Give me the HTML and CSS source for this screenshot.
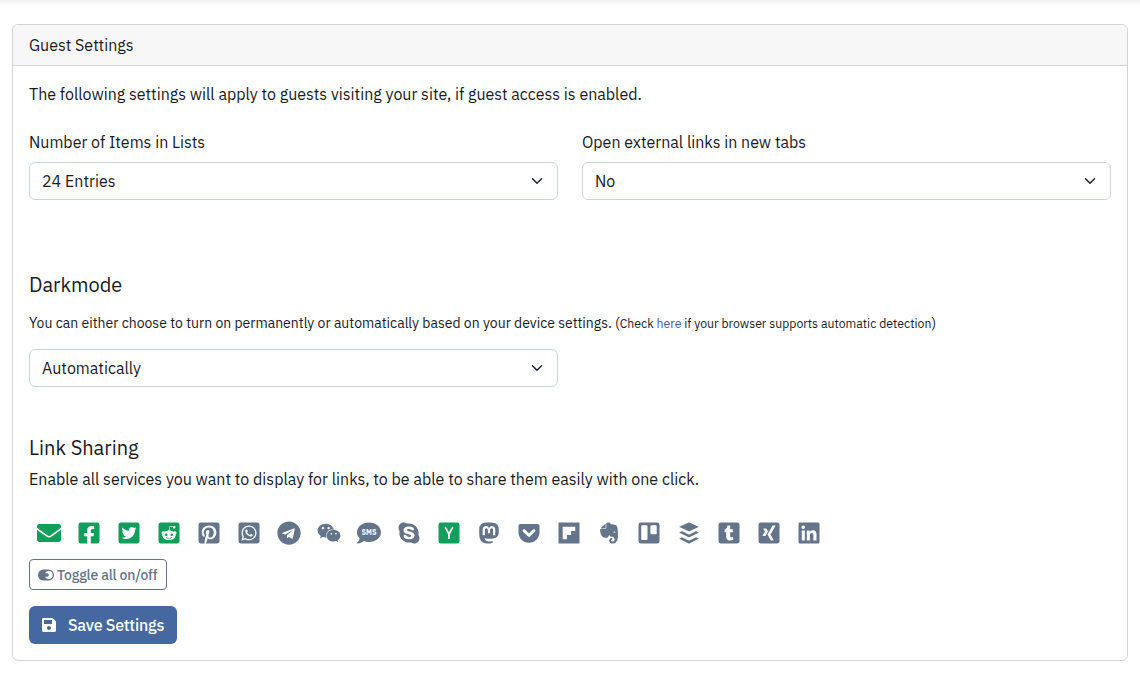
FILE: index.html
```html
<!DOCTYPE html>
<html lang="en">
<head>
<meta charset="utf-8">
<title>Guest Settings</title>
<link rel="stylesheet" href="styles.css">
</head>
<body>
<div class="topbar-shadow"></div>
<main class="card">
  <header class="card-header">Guest Settings</header>
  <div class="card-body">
    <p class="intro">The following settings will apply to guests visiting your site, if guest access is enabled.</p>
    <div class="row">
      <div class="field">
        <label class="label">Number of Items in Lists</label>
        <div class="select"><span>24 Entries</span><svg class="chevron" viewBox="0 0 16 16"><path d="m2 5 6 6 6-6"/></svg></div>
      </div>
      <div class="field">
        <label class="label">Open external links in new tabs</label>
        <div class="select"><span>No</span><svg class="chevron" viewBox="0 0 16 16"><path d="m2 5 6 6 6-6"/></svg></div>
      </div>
    </div>
    <section class="darkmode">
      <h5 class="title">Darkmode</h5>
      <p class="hint">You can either choose to turn on permanently or automatically based on your device settings. (<small>Check <a class="link">here</a> if your browser supports automatic detection</small>)</p>
      <div class="row"><div class="field">
        <div class="select"><span>Automatically</span><svg class="chevron" viewBox="0 0 16 16"><path d="m2 5 6 6 6-6"/></svg></div>
      </div><div class="field"></div></div>
    </section>
    <section class="sharing">
      <h5 class="title">Link Sharing</h5>
      <p class="share-text">Enable all services you want to display for links, to be able to share them easily with one click.</p>
      <div class="services">
        <svg class="icon on" viewBox="0 0 512 512"><path d="M502.3 190.8c3.9-3.1 9.7-.2 9.7 4.7V400c0 26.500-21.500 48-48 48H48c-26.500 0-48-21.500-48-48V195.600c0-5 5.700-7.800 9.700-4.700 22.400 17.400 52.100 39.500 154.100 113.600 21.100 15.400 56.700 47.800 92.200 47.600 35.700.3 72-32.800 92.300-47.600 102-74.100 131.600-96.300 154-113.700zM256 320c23.200.4 56.600-29.200 73.400-41.400 132.700-96.300 142.800-104.700 173.400-128.700 5.800-4.500 9.200-11.500 9.200-18.900v-19c0-26.500-21.500-48-48-48H48c-26.500 0-48 21.500-48 48v19c0 7.400 3.400 14.300 9.200 18.900 30.600 23.900 40.700 32.400 173.400 128.700 16.800 12.200 50.200 41.800 73.400 41.400z"/></svg>
        <svg class="icon on" viewBox="0 0 448 512"><path d="M400 32H48A48 48 0 0 0 0 80v352a48 48 0 0 0 48 48h137.250V327.690h-63V256h63v-54.640c0-62.150 37-96.480 93.670-96.480 27.140 0 55.520 4.840 55.520 4.840v61h-31.270c-30.810 0-40.420 19.120-40.420 38.730V256h68.780l-11 71.690h-57.780V480H400a48 48 0 0 0 48-48V80a48 48 0 0 0-48-48z"/></svg>
        <svg class="icon on" viewBox="0 0 448 512"><path d="M400 32H48C21.500 32 0 53.500 0 80v352c0 26.500 21.500 48 48 48h352c26.500 0 48-21.500 48-48V80c0-26.500-21.500-48-48-48zm-48.900 158.800c.2 2.800.2 5.700.2 8.500 0 86.700-66 186.600-186.600 186.600-37.200 0-71.700-10.800-100.700-29.400 5.300.6 10.400.8 15.800.8 30.700 0 58.900-10.400 81.400-28-28.800-.6-53-19.500-61.300-45.500 10.100 1.500 19.200 1.500 29.600-1.200-30-6.100-52.500-32.500-52.500-64.400v-.8c8.700 4.900 18.900 7.900 29.600 8.300a65.447 65.447 0 0 1-29.200-54.600c0-12.200 3.200-23.400 8.900-33.100 32.300 39.800 80.800 65.800 135.200 68.600-9.300-44.500 24-80.600 64-80.600 18.900 0 35.900 7.900 47.900 20.700 14.800-2.800 29-8.300 41.600-15.800-4.900 15.200-15.200 28-28.800 36.100 13.200-1.400 26-5.100 37.800-10.200-8.900 13.100-20.100 24.700-32.900 34z"/></svg>
        <svg class="icon on" viewBox="0 0 448 512"><path d="M283.2 345.5c2.7 2.7 2.7 6.8 0 9.2-24.5 24.5-93.8 24.6-118.4 0-2.7-2.4-2.7-6.5 0-9.2 2.4-2.4 6.5-2.4 8.9 0 18.7 19.2 81 19.6 100.5 0 2.4-2.3 6.600-2.300 9 0zm-91.300-53.800c0-14.900-11.900-26.800-26.500-26.800-14.900 0-26.800 11.900-26.800 26.800 0 14.600 11.900 26.500 26.800 26.500 14.600 0 26.500-11.900 26.500-26.500zm90.700-26.800c-14.600 0-26.500 11.900-26.500 26.800 0 14.600 11.900 26.500 26.500 26.500 14.900 0 26.800-11.900 26.800-26.500 0-14.900-11.900-26.800-26.800-26.800zM448 80v352c0 26.500-21.500 48-48 48H48c-26.500 0-48-21.500-48-48V80c0-26.500 21.500-48 48-48h352c26.500 0 48 21.500 48 48zm-99.700 140.600c-10.100 0-19 4.200-25.600 10.700-24.100-16.700-56.500-27.400-92.500-28.600l18.700-84.200 59.500 13.400c0 14.600 11.900 26.500 26.500 26.500 14.900 0 26.800-12.200 26.800-26.800 0-14.600-11.900-26.800-26.800-26.800-10.400 0-19.300 6.200-23.800 14.900l-65.700-14.600c-3.300-.9-6.500 1.500-7.400 4.800l-20.500 92.800c-35.700 1.500-67.800 12.200-91.900 28.900-6.500-6.800-15.800-11-25.900-11-37.500 0-49.800 50.400-15.500 67.500-1.200 5.400-1.800 11-1.800 16.700 0 56.500 63.700 102.300 141.900 102.300 78.500 0 142.200-45.800 142.200-102.300 0-5.700-.6-11.600-2.100-17 33.600-17.200 21.200-67.200-16.100-67.200z"/></svg>
        <svg class="icon" viewBox="0 0 448 512"><path d="M448 80v352c0 26.500-21.500 48-48 48H154.400c9.800-16.400 22.400-40 27.400-59.300 3-11.500 15.300-58.400 15.300-58.400 8 15.300 31.400 28.200 56.300 28.200 74.100 0 127.400-68.100 127.400-152.700 0-81.100-66.200-141.800-151.400-141.800-106 0-162.200 71.100-162.200 148.600 0 36 19.200 80.800 49.800 95.100 4.700 2.200 7.100 1.200 8.200-3.300.8-3.400 5-20.100 6.800-27.800.6-2.500.3-4.600-1.700-7-10.100-12.300-18.300-34.900-18.300-56 0-54.200 41-106.600 110.900-106.600 60.300 0 102.600 41.100 102.600 99.900 0 66.400-33.500 112.400-77.200 112.400-24.100 0-42.100-19.900-36.400-44.400 6.900-29.200 20.300-60.700 20.300-81.800 0-53-75.500-45.700-75.500 25 0 21.700 7.300 36.500 7.300 36.500-31.400 132.800-36.100 134.500-29.600 192.600l2.200.8H48c-26.500 0-48-21.500-48-48V80c0-26.500 21.500-48 48-48h352c26.500 0 48 21.500 48 48z"/></svg>
        <svg class="icon" viewBox="0 0 448 512"><path d="M224 122.8c-72.7 0-131.8 59.1-131.9 131.8 0 24.9 7 49.2 20.2 70.1l3.1 5-13.3 48.6 49.9-13.1 4.8 2.9c20.2 12 43.4 18.4 67.1 18.4h.1c72.6 0 133.3-59.1 133.3-131.8 0-35.2-15.2-68.3-40.1-93.2-25-25-58-38.7-93.2-38.7zm77.5 188.4c-3.3 9.3-19.1 17.7-26.7 18.8-12.6 1.900-22.400.9-47.500-9.900-39.700-17.200-65.700-57.200-67.700-59.800-2-2.600-16.200-21.500-16.200-41s10.200-29.100 13.900-33.100c3.600-4 7.900-5 10.600-5 2.600 0 5.300 0 7.600.1 2.400.1 5.700-.9 8.900 6.800 3.300 7.900 11.200 27.400 12.200 29.400s1.700 4.300.3 6.900c-7.600 15.200-15.700 14.600-11.600 21.600 15.300 26.300 30.600 35.400 53.900 47.100 4 2 6.300 1.700 8.600-1 2.300-2.600 9.900-11.600 12.500-15.500 2.600-4 5.300-3.300 8.900-2 3.600 1.300 23.100 10.900 27.100 12.900s6.600 3 7.600 4.600c.9 1.900.9 9.900-2.400 19.100zM400 32H48C21.500 32 0 53.500 0 80v352c0 26.500 21.500 48 48 48h352c26.500 0 48-21.500 48-48V80c0-26.500-21.500-48-48-48zM223.900 413.200c-26.600 0-52.700-6.700-75.800-19.300L64 416l22.500-82.200c-13.900-24-21.200-51.300-21.200-79.300C65.400 167.100 136.500 96 223.900 96c42.400 0 82.200 16.500 112.200 46.500 29.900 30 47.900 69.800 47.900 112.200 0 87.400-72.700 158.500-160.100 158.500z"/></svg>
        <svg class="icon" viewBox="0 0 496 512"><path d="M248 8C111 8 0 119 0 256s111 248 248 248 248-111 248-248S385 8 248 8zm121.800 169.900l-40.700 191.800c-3 13.600-11.100 16.900-22.400 10.500l-62-45.700-29.900 28.800c-3.300 3.300-6.100 6.100-12.500 6.100l4.400-63.100 114.900-103.800c5-4.400-1.100-6.900-7.700-2.500l-142 89.400-61.200-19.100c-13.300-4.200-13.600-13.300 2.800-19.700l239.100-92.200c11.100-4 20.800 2.700 17.200 19.500z"/></svg>
        <svg class="icon" viewBox="0 0 576 512"><path d="M385.2 167.6c6.4 0 12.6.3 18.800 1.100C387.400 90.300 303.300 32 207.700 32 100.500 32 13 104.800 13 197.400c0 53.400 29.300 97.500 77.900 131.600l-19.300 58.600 68-34.100c24.400 4.800 43.800 9.700 68.200 9.700 6.200 0 12.100-.3 18.300-.8-4-12.900-6.200-26.600-6.200-40.800-.1-84.900 72.900-154 165.300-154zm-104.500-52.900c14.500 0 24.200 9.700 24.200 24.400 0 14.500-9.700 24.200-24.200 24.200-14.800 0-29.300-9.700-29.300-24.200.1-14.700 14.600-24.400 29.300-24.400zm-136.400 48.600c-14.500 0-29.300-9.700-29.300-24.200 0-14.800 14.800-24.400 29.300-24.400 14.800 0 24.400 9.700 24.400 24.400 0 14.600-9.600 24.200-24.400 24.200zM563 319.400c0-77.900-77.900-141.300-165.400-141.300-92.700 0-165.400 63.400-165.400 141.300S305 460.700 397.600 460.700c19.300 0 38.900-5.100 58.600-9.900l53.400 29.300-14.800-48.600C534 402.100 563 363.200 563 319.400zm-219.100-24.500c-9.700 0-19.300-9.700-19.300-19.600 0-9.700 9.700-19.300 19.300-19.300 14.800 0 24.400 9.700 24.400 19.300 0 10-9.700 19.600-24.400 19.600zm107.100 0c-9.700 0-19.300-9.700-19.300-19.600 0-9.700 9.700-19.300 19.300-19.300 14.500 0 24.400 9.700 24.400 19.300.1 10-9.900 19.600-24.400 19.600z"/></svg>
        <svg class="icon" viewBox="0 0 512 512"><path d="M256 32C114.600 32 0 125.100 0 240c0 49.600 21.400 95 57 130.700C44.500 421.100 2.700 466 2.200 466.500c-2.200 2.300-2.800 5.700-1.500 8.700 1.300 3 4.100 4.800 7.300 4.800 66.300 0 116-31.800 140.600-51.400 32.700 12.300 69 19.400 107.400 19.400 141.400 0 256-93.100 256-208S397.400 32 256 32z"/><text class="sms" x="256" y="304" text-anchor="middle" textLength="316" lengthAdjust="spacingAndGlyphs">SMS</text></svg>
        <svg class="icon" viewBox="0 0 448 512"><path d="M424.700 299.800c2.900-14 4.700-28.900 4.700-43.800 0-113.500-91.900-205.300-205.300-205.300-14.900 0-29.700 1.700-43.800 4.700C161.300 40.700 137.700 32 112 32 50.200 32 0 82.200 0 144c0 25.700 8.700 49.300 23.300 68.200-2.900 14-4.700 28.900-4.700 43.800 0 113.500 91.900 205.300 205.300 205.300 14.900 0 29.700-1.700 43.800-4.700 19 14.600 42.600 23.300 68.200 23.300 61.800 0 112-50.200 112-112 .1-25.600-8.600-49.200-23.200-68.100zm-194.600 91.500c-65.600 0-120.500-29.200-120.500-65 0-16 9-30.600 29.500-30.600 31.200 0 34.100 44.900 88.100 44.900 25.700 0 42.300-11.400 42.300-26.300 0-18.700-16-21.600-42-28-62.500-15.400-117.800-22-117.800-87.200 0-59.200 58.600-81.100 109.100-81.100 55.100 0 110.800 21.900 110.800 55.400 0 16.900-11.400 31.800-30.300 31.800-28.300 0-29.200-33.500-75-33.500-25.700 0-42 7-42 22.500 0 19.800 20.800 21.800 69.100 33 41.400 9.300 90.700 26.800 90.700 77.600 0 59.100-57.100 86.500-112 86.500z"/></svg>
        <svg class="icon on" viewBox="0 0 448 512"><rect y="32" width="448" height="448" rx="48"/><path class="cut" d="M141 128l83 155 83-155M224 270v114"/></svg>
        <svg class="icon" viewBox="0 0 448 512"><path d="M433 179.110c0-97.200-63.710-125.700-63.710-125.700-62.520-28.700-228.560-28.400-290.480 0 0 0-63.720 28.500-63.720 125.700 0 115.700-6.600 259.400 105.630 289.100 40.510 10.700 75.320 13 103.330 11.400 50.810-2.800 79.320-18.100 79.320-18.100l-1.700-36.900s-36.310 11.400-77.120 10.100c-40.410-1.400-83-4.400-89.630-54a102.540 102.540 0 0 1-.9-13.900c85.630 20.900 158.650 9.100 178.750 6.700 56.120-6.700 105-41.300 111.230-72.900 9.800-49.800 9-121.500 9-121.500zm-75.120 125.200h-46.630v-114.200c0-49.700-64-51.600-64 6.900v62.500h-46.330V197c0-58.500-64-56.600-64-6.900v114.200H90.190c0-122.100-5.200-147.900 18.410-175 25.900-28.900 79.820-30.800 103.830 6.100l11.600 19.500 11.600-19.500c24.110-37.100 78.120-34.800 103.830-6.100 23.710 27.300 18.400 53 18.400 175z"/></svg>
        <svg class="icon" viewBox="0 0 448 512"><path d="M407.600 64h-367C18.500 64 0 82.500 0 104.600v135.200C0 364.500 99.700 464 224.200 464c124 0 223.800-99.500 223.800-224.200V104.600c0-22.400-17.700-40.600-40.400-40.600zm-162 268.500c-12.400 11.800-31.400 11.100-42.400 0C89.500 223.600 88.300 227.400 88.300 209.300c0-16.900 13.800-30.700 30.700-30.700 17 0 16.100 3.800 105.200 89.300 90.600-86.900 88.600-89.300 105.500-89.300 16.900 0 30.700 13.800 30.700 30.700 0 17.800-2.900 15.700-114.800 123.200z"/></svg>
        <svg class="icon" viewBox="0 0 448 512"><path d="M0 32v448h448V32H0zm358.400 179.200h-89.600v89.600h-89.600v89.600H89.600V121.600h268.800v89.600z"/></svg>
        <svg class="icon" viewBox="0 0 384 512"><path d="M120.820 132.210c1.600 22.310-17.550 21.590-21.610 21.590-68.930 0-73.640-1-83.580 3.340-.56.22-.74 0-.37-.37L123.790 46.450c.38-.37.6-.22.38.37-4.350 9.990-3.350 15.090-3.350 85.390zm79 308c-14.680-37.080 13-76.930 52.520-76.620 17.490 0 22.600 23.210 7.950 31.420-6.190 3.300-24.950 1.740-25.140 19.200-.05 17.090 19.670 25 31.200 24.890A45.640 45.640 0 0 0 312 393.450v-.08c0-11.630-7.790-47.220-47.540-55.340-7.720-1.540-65-6.350-68.350-50.520-3.740 16.930-17.400 63.490-43.110 69.090-8.740 1.940-69.680 7.640-112.920-36.770 0 0-18.570-15.230-28.230-57.950-3.380-15.750-9.280-39.700-11.140-62 0-18 11.140-30.450 25.070-32.200 81 0 90 2.320 101-7.800 9.820-9.240 7.800-15.500 7.800-102.780 1-8.300 7.790-30.810 53.410-24.140 6 .86 31.910 4.180 37.480 30.640l64.260 11.150c20.430 3.710 70.940 7 80.600 57.940 22.660 121.090 8.910 238.460 7.800 238.460C362.150 485.530 267.060 480 267.060 480c-18.950-.23-54.250-9.400-67.270-39.830zm80.940-204.840c-1 1.920-2.200 6 .85 7 14.090 4.930 39.750 6.840 45.880 5.530 3.110-.25 3.050-4.430 2.480-6.650-3.530-21.850-40.830-26.500-49.240-5.920z"/></svg>
        <svg class="icon" viewBox="0 0 448 512"><path fill-rule="evenodd" d="M48 32h352a48 48 0 0 1 48 48v352a48 48 0 0 1-48 48H48a48 48 0 0 1-48-48V80a48 48 0 0 1 48-48zm32 58a22 22 0 0 0-22 22v270a22 22 0 0 0 22 22h90a22 22 0 0 0 22-22V112a22 22 0 0 0-22-22zm196 0a22 22 0 0 0-22 22v148a22 22 0 0 0 22 22h90a22 22 0 0 0 22-22V112a22 22 0 0 0-22-22z"/></svg>
        <svg class="icon" viewBox="0 0 448 512"><path d="M427.840 380.670l-196.500 97.820a18.600 18.600 0 0 1-14.670 0L20.160 380.670c-4-2-4-5.280 0-7.290L67.220 350a18.650 18.650 0 0 1 14.690 0l134.760 67a18.510 18.510 0 0 0 14.670 0l134.760-67a18.620 18.620 0 0 1 14.680 0l47.060 23.430c4.050 1.960 4.050 5.240 0 7.240zm0-136.530l-47.060-23.430a18.620 18.620 0 0 0-14.680 0l-134.760 67.080a18.680 18.680 0 0 1-14.670 0L81.910 220.710a18.650 18.650 0 0 0-14.690 0l-47.060 23.430c-4 2-4 5.290 0 7.310l196.510 97.800a18.600 18.600 0 0 0 14.670 0l196.500-97.800c4.050-2.020 4.050-5.300 0-7.310zM20.160 130.420l196.500 90.290a20.080 20.080 0 0 0 14.670 0l196.510-90.290c4-1.860 4-4.890 0-6.740L231.330 33.390a19.880 19.880 0 0 0-14.670 0l-196.500 90.280c-4.050 1.850-4.050 4.880 0 6.750z"/></svg>
        <svg class="icon" viewBox="0 0 448 512"><path d="M400 32H48C21.500 32 0 53.500 0 80v352c0 26.500 21.500 48 48 48h352c26.500 0 48-21.500 48-48V80c0-26.500-21.500-48-48-48zm-82.300 364.200c-8.500 9.100-31.200 19.800-60.900 19.800-75.500 0-91.900-55.500-91.900-87.900v-90h-29.700c-3.400 0-6.200-2.800-6.200-6.200v-42.500c0-4.500 2.800-8.500 7.100-10 38.800-13.700 50.900-47.500 52.700-73.200.5-6.900 4.100-10.200 10-10.200h44.300c3.400 0 6.200 2.800 6.200 6.200v72h51.900c3.400 0 6.200 2.800 6.200 6.200v51.100c0 3.400-2.800 6.200-6.200 6.200h-52.100V321c0 21.400 14.800 33.500 42.500 22.400 3-1.200 5.600-2 8-1.400 2.200.5 3.600 2.100 4.600 4.900l13.800 40.200c1 3.200 2 6.700-.3 9.100z"/></svg>
        <svg class="icon" viewBox="0 0 448 512"><path d="M400 32H48C21.500 32 0 53.500 0 80v352c0 26.500 21.500 48 48 48h352c26.500 0 48-21.500 48-48V80c0-26.500-21.500-48-48-48zM140.400 320.200H93.800c-5.500 0-8.700-5.300-6-10.300l49.300-86.700c.1 0 .1-.1 0-.2l-31.400-54c-3-5.600.2-10.100 6-10.100h46.600c5.200 0 9.500 2.900 12.900 8.700l31.900 55.300c-1.300 2.300-18 31.700-50.100 88.200-3.500 6.200-7.700 9.100-12.600 9.100zm219.700-214.100L257.300 286.800v.2l65.500 119c2.800 5.100.1 10.100-6 10.100h-46.600c-5.500 0-9.700-2.900-12.900-8.700l-66-120.300c2.300-4.100 36.800-64.900 103.400-182.300 3.300-5.800 7.400-8.700 12.500-8.700h46.900c5.700-.1 8.800 4.700 6 10z"/></svg>
        <svg class="icon" viewBox="0 0 448 512"><path d="M416 32H31.900C14.300 32 0 46.500 0 64.300v383.400C0 465.500 14.300 480 31.900 480H416c17.600 0 32-14.500 32-32.300V64.300c0-17.800-14.400-32.300-32-32.300zM135.400 416H69V202.200h66.500V416zm-33.200-243c-21.300 0-38.500-17.300-38.500-38.500S80.900 96 102.200 96c21.200 0 38.500 17.300 38.500 38.500 0 21.300-17.200 38.500-38.500 38.500zm282.100 243h-66.400V312c0-24.800-.5-56.700-34.500-56.700-34.600 0-39.900 27-39.900 54.900V416h-66.400V202.200h63.700v29.200h.9c8.900-16.800 30.600-34.500 62.900-34.500 67.200 0 79.700 44.300 79.700 101.900V416z"/></svg>
      </div>
      <button class="btn btn-toggle"><svg class="toggle-icon" viewBox="0 0 16 12"><rect x="0" y=".5" width="16" height="11" rx="5.500"/><circle class="knob" cx="10.800" cy="6" r="3.900"/><path d="M6.900 4.200h2.200a1.800 1.800 0 0 1 0 3.600H6.900z"/></svg><span>Toggle all on/off</span></button>
    </section>
    <button class="btn btn-save"><svg class="save-icon" viewBox="0 0 448 448"><path d="M433.900 97.900l-83.800-83.800A48 48 0 0 0 316.100 0H48C21.500 0 0 21.500 0 48v352c0 26.500 21.500 48 48 48h352c26.500 0 48-21.500 48-48V131.900a48 48 0 0 0-14.100-34zM224 384c-35.300 0-64-28.700-64-64s28.700-64 64-64 64 28.700 64 64-28.700 64-64 64zm96-304.500V180c0 6.600-5.400 12-12 12H76c-6.600 0-12-5.400-12-12V76c0-6.600 5.400-12 12-12h228.500c3.200 0 6.200 1.300 8.500 3.500l3.500 3.500a12 12 0 0 1 3.500 8.500z"/></svg><span>Save Settings</span></button>
  </div>
</main>
</body>
</html>
```
FILE: styles.css
```css
* { box-sizing: border-box; }
body {
  margin: 0;
  background: #fff;
  color: #191b1f;
  font: 16px/24px "IBM Plex Sans", Roboto, "Noto Sans", sans-serif;
}
p, h5 { margin: 0; }
.topbar-shadow { height: 6px; background: linear-gradient(#f1f1f1, #fff); }
.card {
  margin: 18px 12px 0;
  height: 637px;
  border: 1px solid #d3d4d5;
  border-radius: 6px;
  overflow: hidden;
}
.card-header {
  height: 41px;
  padding: 8px 16px;
  background: #f7f7f7;
  border-bottom: 1px solid #d3d4d5;
}
.card-body { padding: 16px; }
.intro { margin-bottom: 24px; }
.row { display: flex; gap: 24px; }
.field { flex: 1; min-width: 0; }
.label { display: block; margin-bottom: 8px; }
.select {
  display: flex;
  align-items: center;
  justify-content: space-between;
  height: 38px;
  padding: 0 12px;
  border: 1px solid #cbd5e1;
  border-radius: 6px;
}
.chevron {
  width: 16px;
  height: 12px;
  fill: none;
  stroke: #1e293b;
  stroke-width: 2;
  stroke-linecap: round;
  stroke-linejoin: round;
}
.darkmode { margin-top: 73px; }
.title { font-size: 20px; font-weight: 400; line-height: 24px; }
.hint { margin: 16px 0; font-size: 14px; line-height: 20px; white-space: nowrap; }
.hint small { font-size: 12.25px; }
.link { color: #3f5f9f; }
.sharing { margin-top: 49px; }
.share-text { margin-top: 7px; }
.services { display: flex; gap: 16px; margin: 30px 0 14px; padding-left: 8px; }
.icon { width: 24px; height: 24px; fill: #64748b; }
.icon.on { fill: #109f5b; }
.icon .cut { fill: none; stroke: #fff; stroke-width: 36; }
.icon .sms { fill: #fff; font-size: 182px; font-weight: 900; }
.btn { display: flex; align-items: center; font-family: inherit; font-weight: 500; white-space: nowrap; }
.btn-toggle {
  width: 138px;
  height: 31px;
  padding: 0 8px;
  gap: 3px;
  border: 1px solid #64748b;
  border-radius: 4px;
  background: #fff;
  color: #64748b;
  font-size: 14px;
  letter-spacing: -0.15px;
}
.toggle-icon { width: 16px; height: 12px; flex: none; fill: #64748b; }
.toggle-icon .knob { fill: #fff; }
.btn-save {
  width: 148px;
  height: 38px;
  margin-top: 16px;
  padding: 0 13px;
  gap: 12px;
  border: 0;
  border-radius: 6px;
  background: #4568a1;
  color: #fff;
  font-size: 16px;
  letter-spacing: -0.22px;
}
.save-icon { width: 14px; height: 14px; flex: none; fill: #fff; }
```
